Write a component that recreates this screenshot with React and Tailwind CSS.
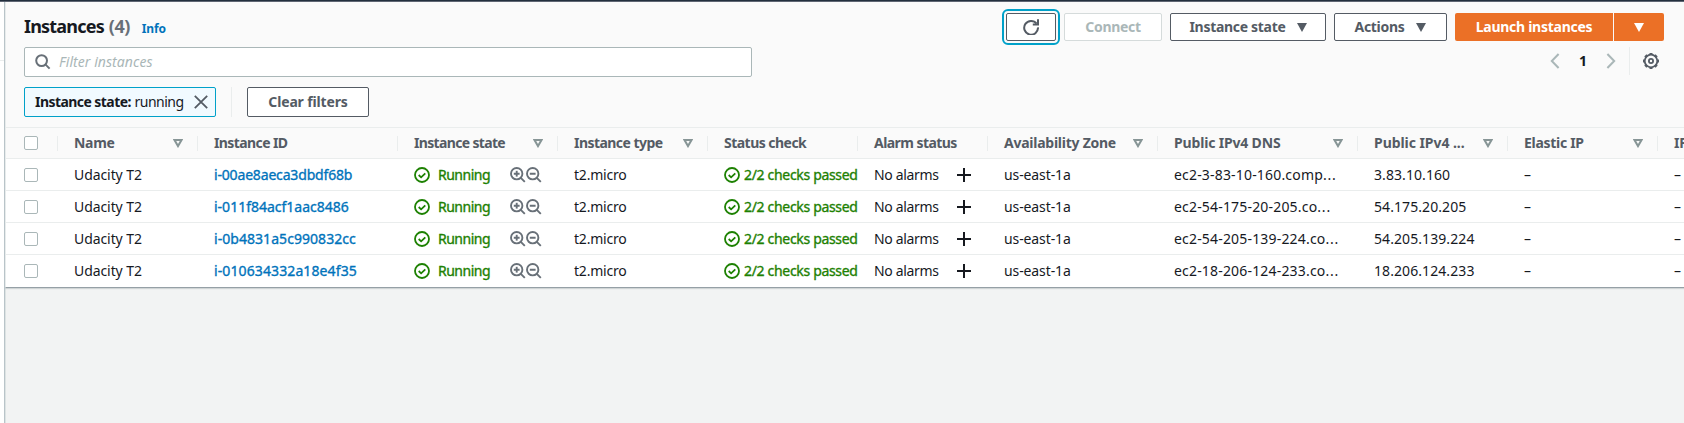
const COLUMNS = [
  { label: 'Name', width: 'w-[140px]', tracking: 'tracking-[-0.3px]', sort: true },
  { label: 'Instance ID', width: 'w-[200px]', tracking: 'tracking-[-0.6px]' },
  { label: 'Instance state', width: 'w-[160px]', tracking: 'tracking-[-0.66px]', sort: true },
  { label: 'Instance type', width: 'w-[150px]', tracking: 'tracking-[-0.55px]', sort: true },
  { label: 'Status check', width: 'w-[150px]', tracking: 'tracking-[-0.53px]' },
  { label: 'Alarm status', width: 'w-[130px]', tracking: 'tracking-[-0.56px]' },
  { label: 'Availability Zone', width: 'w-[170px]', tracking: 'tracking-[-0.25px]', sort: true },
  { label: 'Public IPv4 DNS', width: 'w-[200px]', tracking: 'tracking-[-0.17px]', sort: true },
  { label: 'Public IPv4 ...', width: 'w-[150px]', tracking: 'tracking-[-0.06px]', sort: true },
  { label: 'Elastic IP', width: 'w-[150px]', tracking: 'tracking-[-0.3px]', sort: true },
  { label: 'IPv6 IPs', width: 'w-[150px]', tracking: 'tracking-[-0.3px]' },
];

const ROWS = [
  { id: 'i-00ae8aeca3dbdf68b', tracking: 'tracking-[-0.17px]', dns: 'ec2-3-83-10-160.comp', ip: '3.83.10.160' },
  { id: 'i-011f84acf1aac8486', tracking: 'tracking-[0px]', dns: 'ec2-54-175-20-205.co', ip: '54.175.20.205' },
  { id: 'i-0b4831a5c990832cc', tracking: 'tracking-[0.05px]', dns: 'ec2-54-205-139-224.co', ip: '54.205.139.224' },
  { id: 'i-010634332a18e4f35', tracking: 'tracking-[0.11px]', dns: 'ec2-18-206-124-233.co', ip: '18.206.124.233' },
];

function Svg({ className = '', children, sw = 2 }) {
  return (
    <svg viewBox="0 0 16 16" width="16" height="16" fill="none" stroke="currentColor" strokeWidth={sw} className={`shrink-0 ${className}`}>
      {children}
    </svg>
  );
}

const Check = () => (
  <Svg sw={1.8} className="text-[#1d8102]">
    <circle cx="8" cy="8" r="7" />
    <path d="M4.7 8l2.4 2.3 4.2-4" />
  </Svg>
);

const Magnifier = ({ plus }) => (
  <Svg sw={1.9} className="text-[#687078]">
    <circle cx="6.7" cy="6.7" r="5.7" />
    <path d="M10.8 10.8l4 4M3.8 6.7h5.8" />
    {plus && <path d="M6.7 3.8v5.8" />}
  </Svg>
);

const Caret = () => (
  <svg viewBox="0 0 10 9" width="10" height="9" fill="currentColor" className="shrink-0">
    <path d="M0 0h10L5 9z" />
  </svg>
);

const SortIcon = () => (
  <svg viewBox="0 0 10 9" width="10" height="9" fill="none" stroke="#879596" strokeWidth="2" className="shrink-0">
    <path d="M1.5 1h7L5 7.1z" />
  </svg>
);

const Checkbox = () => <span className="h-3.5 w-3.5 rounded-[2px] border border-[#aab7b8] bg-white" />;

const Cell = ({ i, className = '', children }) => (
  <div className={`${COLUMNS[i].width} flex shrink-0 items-center overflow-hidden whitespace-nowrap pl-4 ${className}`}>{children}</div>
);

const BTN = 'flex h-7 shrink-0 items-center justify-center rounded-[2px] border bg-white font-bold tracking-[-0.3px]';

const MEDIUM = '[-webkit-text-stroke:0.35px_currentColor]';

const GEAR_TEETH = [0, 45, 90, 135, 180, 225, 270, 315];

export default function App() {
  return (
    <div className="h-[423px] w-[1684px] overflow-hidden bg-white font-['Noto_Sans',sans-serif] text-[14px] leading-5 text-[#16191f]">
      <div className="h-px bg-[#232f3e]" />
      <div className="h-px bg-[#5f6673]" />
      <div className="flex h-[421px]">
        <div className="w-1 shrink-0">
          <div className="h-[59px] border-b border-[#eaeded]" />
        </div>
        <div className="w-px shrink-0 bg-[#b9c4c9]" />
        <main className="w-[1679px] shrink-0 overflow-hidden bg-[#f2f3f3] shadow-[inset_1px_0_0_#dde3e3]">
          <section className="border-l border-[#e8ecec] bg-[#fafafa]">
            <div className="flex h-[45px] items-start pl-[18px] pr-5">
              <h1 className="mt-[11px] text-[18px] font-bold leading-[26px] tracking-[-0.8px]">
                Instances <span className="ml-px tracking-[-0.5px] text-[#687078]">(4)</span>
              </h1>
              <a className="ml-[12px] mt-[17px] text-[12px] font-bold leading-5 tracking-[-0.1px] text-[#0073bb]">Info</a>
              <div className="ml-auto mt-[11px] flex items-center">
                <button className={`${BTN} w-[50px] border-[#545b64] text-[#545b64] outline-2 outline-offset-2 outline-[#00a1c9]`}>
                  <Svg>
                    <path d="M13.6 4.6A6.9 6.9 0 1 0 15 8.4" />
                    <path d="M15 .3v5.2H9.8" />
                  </Svg>
                </button>
                <button className={`${BTN} ml-2 w-[98px] border-[#d5dbdb] text-[#aab7b8]`}>Connect</button>
                <button className={`${BTN} ml-2 w-[156px] gap-[11px] border-[#545b64] text-[#545b64]`}>
                  Instance state <Caret />
                </button>
                <button className={`${BTN} ml-2 w-[113px] gap-[12px] border-[#545b64] text-[#545b64]`}>
                  Actions <Caret />
                </button>
                <button className="ml-2 flex h-7 w-[158px] items-center justify-center rounded-l-[2px] bg-[#eb7026] font-bold tracking-[-0.27px] text-white">Launch instances</button>
                <button className="ml-px flex h-7 w-[50px] items-center justify-center rounded-r-[2px] bg-[#eb7026] text-white">
                  <Caret />
                </button>
              </div>
            </div>
            <div className="flex h-[30px] items-start pl-[18px] pr-[25px]">
              <div className="flex h-[30px] w-[728px] items-center rounded-[2px] border border-[#aab7b8] bg-white pl-2.5">
                <Svg className="text-[#687078]">
                  <circle cx="6.6" cy="6.6" r="5.4" />
                  <path d="M10.4 10.4l4.2 4.2" />
                </Svg>
                <span className="ml-2 italic tracking-[0.06px] text-[#aab7b8]">Filter instances</span>
              </div>
              <div className="ml-auto flex h-7 items-center">
                <Svg className="text-[#aab7b8]">
                  <path d="M11.6 1L4.8 8l6.8 7" />
                </Svg>
                <span className="ml-[14px] w-3 text-center text-[14px] font-bold">1</span>
                <Svg className="ml-[14px] text-[#aab7b8]">
                  <path d="M4.4 1l6.8 7-6.8 7" />
                </Svg>
                <span className="ml-[10px] h-7 w-px bg-[#eaeded]" />
                <Svg sw={1.8} className="ml-[13px] text-[#545b64]">
                  <circle cx="8" cy="8" r="6.3" />
                  {GEAR_TEETH.map((a) => (
                    <path key={a} d="M6.5 .9h3" transform={`rotate(${a} 8 8)`} />
                  ))}
                  <circle cx="8" cy="8" r="2.1" />
                </Svg>
              </div>
            </div>
            <div className="flex h-[50px] items-start pl-[18px] pt-[10px]">
              <div className="flex h-[30px] w-[192px] items-center rounded-[2px] border border-[#00a1c9] bg-[#f1faff] pl-2.5">
                <span className="whitespace-nowrap"><b className="tracking-[-0.56px]">Instance state:</b> <span className="tracking-[-0.5px]">running</span></span>
                <Svg sw={1.8} className="ml-auto mr-[6px] text-[#545b64]">
                  <path d="M1.8 1.8l12.4 12.4M14.2 1.8L1.8 14.2" />
                </Svg>
              </div>
              <span className="ml-[15px] h-[30px] w-px bg-[#eaeded]" />
              <button className={`${BTN} ml-[15px] h-[30px] w-[122px] border-[#545b64] text-[#545b64]`}><span className="tracking-[-0.15px]">Clear filters</span></button>
            </div>
            <div className="flex h-8 w-[1810px] items-center border-y border-[#eaeded] font-bold text-[#545b64]">
              <div className="flex h-[15px] w-[52px] shrink-0 items-center border-r border-[#eaeded] pl-[18px]"><Checkbox /></div>
              {COLUMNS.map((c) => (
                <div key={c.label} className={`${c.width} ${c.tracking} flex h-[15px] shrink-0 items-center justify-between whitespace-nowrap border-r border-[#eaeded] pl-4 pr-3.5`}>
                  {c.label}
                  {c.sort && <SortIcon />}
                </div>
              ))}
            </div>
          </section>
          <section className="border-b border-l border-b-[#95a0a6] border-l-[#e8ecec] bg-white shadow-[0_1px_1px_#d0d5d6]">
            {ROWS.map((r) => (
              <div key={r.id} className="flex h-8 w-[1810px] border-b border-[#eaeded] last:border-transparent">
                <div className="flex w-[52px] shrink-0 items-center pl-[18px]"><Checkbox /></div>
                <Cell i={0} className="tracking-[-0.08px]">Udacity T2</Cell>
                <Cell i={1} className={`text-[#0073bb] ${MEDIUM} ${r.tracking}`}>{r.id}</Cell>
                <Cell i={2} className="text-[#1d8102]">
                  <Check />
                  <span className={`ml-2 w-[72px] tracking-[-0.5px] ${MEDIUM}`}>Running</span>
                  <Magnifier plus />
                  <Magnifier />
                </Cell>
                <Cell i={3} className="tracking-[-0.2px]">t2.micro</Cell>
                <Cell i={4} className="text-[#1d8102]">
                  <Check />
                  <span className={`ml-1 tracking-[-0.32px] ${MEDIUM}`}>2/2 checks passed</span>
                </Cell>
                <Cell i={5}>
                  <span className="w-[82px] tracking-[-0.35px]">No alarms</span>
                  <Svg><path d="M8 1v14M1 8h14" /></Svg>
                </Cell>
                <Cell i={6} className="tracking-[-0.1px]">us-east-1a</Cell>
                <Cell i={7} className="tracking-[0.18px]">{r.dns}<span className="tracking-[0.8px]">...</span></Cell>
                <Cell i={8} className="tracking-[0.08px]">{r.ip}</Cell>
                <Cell i={9}>–</Cell>
                <Cell i={10}>–</Cell>
              </div>
            ))}
          </section>
        </main>
      </div>
    </div>
  );
}
